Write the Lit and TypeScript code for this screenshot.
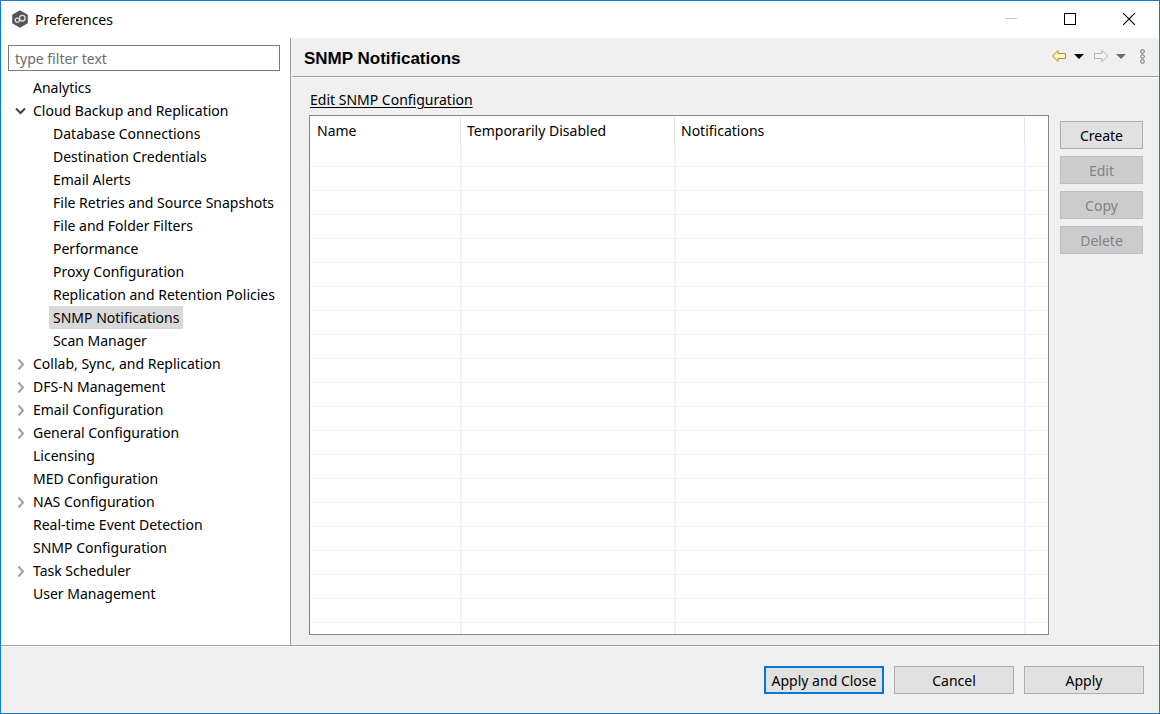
import { LitElement, html, css, svg, nothing } from "lit";
import { customElement, property, state } from "lit/decorators.js";
import { classMap } from "lit/directives/class-map.js";

interface TreeNode {
  label: string;
  expandable?: boolean;
  children?: TreeNode[];
}

const TREE: TreeNode[] = [
  { label: "Analytics" },
  {
    label: "Cloud Backup and Replication",
    expandable: true,
    children: [
      { label: "Database Connections" },
      { label: "Destination Credentials" },
      { label: "Email Alerts" },
      { label: "File Retries and Source Snapshots" },
      { label: "File and Folder Filters" },
      { label: "Performance" },
      { label: "Proxy Configuration" },
      { label: "Replication and Retention Policies" },
      { label: "SNMP Notifications" },
      { label: "Scan Manager" },
    ],
  },
  { label: "Collab, Sync, and Replication", expandable: true },
  { label: "DFS-N Management", expandable: true },
  { label: "Email Configuration", expandable: true },
  { label: "General Configuration", expandable: true },
  { label: "Licensing" },
  { label: "MED Configuration" },
  { label: "NAS Configuration", expandable: true },
  { label: "Real-time Event Detection" },
  { label: "SNMP Configuration" },
  { label: "Task Scheduler", expandable: true },
  { label: "User Management" },
];

@customElement("pref-titlebar")
export class PrefTitlebar extends LitElement {
  static styles = css`
    :host {
      display: flex;
      align-items: center;
      height: 37px;
      padding-right: 1px;
      background: #fff;
    }
    .logo {
      margin: 0 6px 2px 10px;
      flex: none;
    }
    .title {
      flex: 1;
    }
    .control {
      display: grid;
      place-items: center;
      width: 59px;
      height: 37px;
      padding: 0 0 1px;
      border: 0;
      background: none;
    }
  `;

  render() {
    return html`
      <svg class="logo" width="18" height="18" viewBox="0 0 18 18" aria-hidden="true">
        <path d="M9 .3 16.8 4.700V13.300L9 17.700 1.200 13.300V4.700Z" fill="#555" />
        <circle cx="6.300" cy="10.200" r="2.100" fill="none" stroke="#ddd" stroke-width="1.300" />
        <circle cx="11.300" cy="8.200" r="2.800" fill="none" stroke="#ddd" stroke-width="1.300" />
      </svg>
      <span class="title">Preferences</span>
      <button class="control" aria-label="Minimize" disabled>
        <svg width="12" height="12"><path d="M0 5.500H12" stroke="#c8c8c8" /></svg>
      </button>
      <button class="control" aria-label="Maximize">
        <svg width="12" height="12">
          <rect x=".5" y=".5" width="11" height="11" fill="none" stroke="#000" />
        </svg>
      </button>
      <button class="control" aria-label="Close">
        <svg width="12" height="12"><path d="M0 0 12 12M12 0 0 12" stroke="#000" stroke-width="1.100" /></svg>
      </button>
    `;
  }
}

@customElement("pref-tree")
export class PrefTree extends LitElement {
  @state() private filter = "";
  @state() private collapsed = new Set<string>();
  @state() private selected = "SNMP Notifications";

  static styles = css`
    :host {
      display: block;
      background: #fff;
      padding: 7px 10px 0 7px;
    }
    .filter {
      display: block;
      box-sizing: border-box;
      width: 100%;
      height: 26px;
      padding: 0 6px;
      border: 1px solid #7a7a7a;
      border-radius: 0;
      background: #fff;
      font: inherit;
      color: #000;
      outline: none;
    }
    .filter::placeholder {
      color: #6d6d6d;
      opacity: 1;
    }
    .list {
      list-style: none;
      margin: 0;
      padding: 0;
    }
    .root {
      margin-top: 5px;
    }
    .nested {
      padding-left: 20px;
    }
    .row {
      display: flex;
      height: 23px;
      white-space: nowrap;
    }
    .toggle {
      flex: none;
      display: grid;
      place-items: center;
      width: 21px;
      padding: 0 0 0 4px;
      border: 0;
      background: none;
      color: #a0a0a0;
    }
    .toggle.open {
      color: #404040;
    }
    .space {
      flex: none;
      width: 21px;
    }
    .label {
      padding: 0 4px;
      line-height: 23px;
      color: #000;
      text-decoration: none;
    }
    .label.selected {
      background: #d9d9d9;
    }
  `;

  private toggle(label: string) {
    const next = new Set(this.collapsed);
    if (!next.delete(label)) next.add(label);
    this.collapsed = next;
  }

  private matches(node: TreeNode): boolean {
    const text = this.filter.toLowerCase();
    return node.label.toLowerCase().includes(text) || !!node.children?.some((c) => this.matches(c));
  }

  private renderNode(node: TreeNode): unknown {
    const open = !!node.children && !this.collapsed.has(node.label);
    return html`
      <li>
        <div class="row">
          ${node.expandable
            ? html`<button
                class=${classMap({ toggle: true, open })}
                aria-label=${(open ? "Collapse " : "Expand ") + node.label}
                @click=${() => this.toggle(node.label)}
              >
                <svg width="12" height="12" fill="none" stroke="currentColor" stroke-width="2">
                  ${open ? svg`<path d="M1 3.500 5.500 8 10 3.500" />` : svg`<path d="M3.500 1.500 8 6.500 3.500 11.500" />`}
                </svg>
              </button>`
            : html`<span class="space"></span>`}
          <a
            class=${classMap({ label: true, selected: node.label === this.selected })}
            href="#"
            @click=${() => (this.selected = node.label)}
            >${node.label}</a
          >
        </div>
        ${open
          ? html`<ul class="list nested">
              ${node.children!.filter((c) => this.matches(c)).map((c) => this.renderNode(c))}
            </ul>`
          : nothing}
      </li>
    `;
  }

  render() {
    return html`
      <input
        class="filter"
        type="text"
        aria-label="Filter preferences"
        placeholder="type filter text"
        .value=${this.filter}
        @input=${(e: Event) => (this.filter = (e.target as HTMLInputElement).value)}
      />
      <ul class="list root">
        ${TREE.filter((n) => this.matches(n)).map((n) => this.renderNode(n))}
      </ul>
    `;
  }
}

@customElement("pref-grid")
export class PrefGrid extends LitElement {
  @property({ type: Number }) rows = 21;

  static styles = css`
    :host {
      display: block;
      box-sizing: border-box;
      overflow: hidden;
      padding: 1px;
      border: 1px solid #828790;
      background: #fff;
      contain: size;
    }
    .table {
      width: 100%;
      table-layout: fixed;
      border-collapse: separate;
      border-spacing: 0;
    }
    .name {
      width: 151px;
    }
    .disabled {
      width: 214px;
    }
    .rest {
      width: 21px;
    }
    .head {
      box-sizing: border-box;
      height: 26px;
      padding: 2px 5px 0;
      text-align: left;
      font-weight: normal;
      line-height: 24px;
      background: linear-gradient(#e5e5e5, #e5e5e5) right 1px top / 1px 100% no-repeat;
    }
    .head:first-child {
      padding-left: 6px;
    }
    .cell {
      box-sizing: border-box;
      height: 24px;
      padding: 0;
      border-right: 2px solid #ebf3fd;
      border-bottom: 1px solid #f0f0f0;
    }
    .head:last-child {
      background: none;
    }
    .cell:last-child {
      border-right: 0;
    }
  `;

  render() {
    return html`
      <table class="table" aria-label="SNMP notifications">
        <colgroup>
          <col class="name" />
          <col class="disabled" />
          <col />
          <col class="rest" />
        </colgroup>
        <thead>
          <tr>
            <th class="head" scope="col">Name</th>
            <th class="head" scope="col">Temporarily Disabled</th>
            <th class="head" scope="col">Notifications</th>
            <td class="head"></td>
          </tr>
        </thead>
        <tbody>
          ${Array.from(
            { length: this.rows },
            () => html`<tr>
              <td class="cell"></td>
              <td class="cell"></td>
              <td class="cell"></td>
              <td class="cell"></td>
            </tr>`
          )}
        </tbody>
      </table>
    `;
  }
}

@customElement("app-root")
export class AppRoot extends LitElement {
  static styles = css`
    :host {
      display: flex;
      flex-direction: column;
      box-sizing: border-box;
      min-height: 100vh;
      border: 1px solid #1979ca;
      background: #f0f0f0;
      color: #000;
      font: 14px/20px "Noto Sans", "Open Sans", sans-serif;
    }
    .main {
      flex: 1;
      display: grid;
      grid-template-columns: 289px 1fr;
      border-bottom: 1px solid #a0a0a0;
    }
    .page {
      display: flex;
      flex-direction: column;
      border-left: 1px solid #a0a0a0;
    }
    .header {
      display: flex;
      align-items: center;
      height: 38px;
      margin-left: 1px;
      padding: 0 10px 0 12px;
      border-bottom: 1px solid #a0a0a0;
      box-shadow: 0 1px #fff;
    }
    .heading {
      flex: 1;
      margin: 0;
      padding-top: 4px;
      font: bold 17px/20px "Liberation Sans", Arial, sans-serif;
    }
    .tools {
      display: flex;
      align-items: center;
      height: 34px;
      padding-bottom: 2px;
    }
    .tool {
      display: flex;
      padding: 0;
      border: 0;
      background: none;
    }
    .arrow {
      margin-right: 8px;
    }
    .drop {
      margin-right: 9px;
    }
    .body {
      flex: 1;
      display: grid;
      grid-template-columns: 1fr 83px;
      grid-template-rows: auto 1fr;
      column-gap: 11px;
      padding: 13px 16px 10px 18px;
    }
    .link {
      grid-column: 1 / -1;
      justify-self: start;
      margin-left: 1px;
      height: 25px;
      color: #000;
      text-underline-offset: 2px;
    }
    .side {
      display: flex;
      flex-direction: column;
      gap: 7px;
      padding-top: 6px;
    }
    .btn {
      box-sizing: border-box;
      height: 28px;
      padding: 2px 0 0;
      border: 1px solid #adadad;
      border-radius: 0;
      background: #e1e1e1;
      color: #000;
      font: inherit;
      white-space: nowrap;
    }
    .btn:disabled {
      border-color: #bfbfbf;
      background: #ccc;
      color: #838383;
    }
    .footer {
      display: flex;
      justify-content: flex-end;
      gap: 10px;
      padding: 19px 15px;
      border-top: 1px solid #fff;
    }
    .wide {
      width: 120px;
    }
    .default {
      border: 2px solid #0078d7;
    }
  `;

  render() {
    const arrow = svg`<path d="M1.500 7 7 1.500V4.500H14.500V9.500H7V12.500Z" stroke-linejoin="round" />`;
    return html`
      <pref-titlebar></pref-titlebar>
      <div class="main">
        <pref-tree></pref-tree>
        <section class="page">
          <header class="header">
            <h1 class="heading">SNMP Notifications</h1>
            <div class="tools">
              <button class="tool arrow" aria-label="Back">
                <svg width="15" height="14" fill="#fff3c4" stroke="#c08a1e">${arrow}</svg>
              </button>
              <button class="tool drop" aria-label="Back history">
                <svg width="10" height="5"><path d="M0 0H10L5 5Z" fill="#000" /></svg>
              </button>
              <button class="tool arrow" aria-label="Forward" disabled>
                <svg width="15" height="14" fill="#f6f6f6" stroke="#b4b4b4">
                  <g transform="matrix(-1 0 0 1 16 0)">${arrow}</g>
                </svg>
              </button>
              <button class="tool drop" aria-label="Forward history" disabled>
                <svg width="10" height="5"><path d="M0 0H10L5 5Z" fill="#6d6d6d" /></svg>
              </button>
              <button class="tool" aria-label="Menu">
                <svg width="14" height="16" fill="none" stroke="#666">
                  <circle cx="7.500" cy="3.500" r="1.800" />
                  <circle cx="7.500" cy="8.500" r="1.800" />
                  <circle cx="7.500" cy="13.500" r="1.800" />
                </svg>
              </button>
            </div>
          </header>
          <div class="body">
            <a class="link" href="#">Edit SNMP Configuration</a>
            <pref-grid></pref-grid>
            <div class="side">
              <button class="btn">Create</button>
              <button class="btn" disabled>Edit</button>
              <button class="btn" disabled>Copy</button>
              <button class="btn" disabled>Delete</button>
            </div>
          </div>
        </section>
      </div>
      <footer class="footer">
        <button class="btn wide default">Apply and Close</button>
        <button class="btn wide">Cancel</button>
        <button class="btn wide">Apply</button>
      </footer>
    `;
  }
}
